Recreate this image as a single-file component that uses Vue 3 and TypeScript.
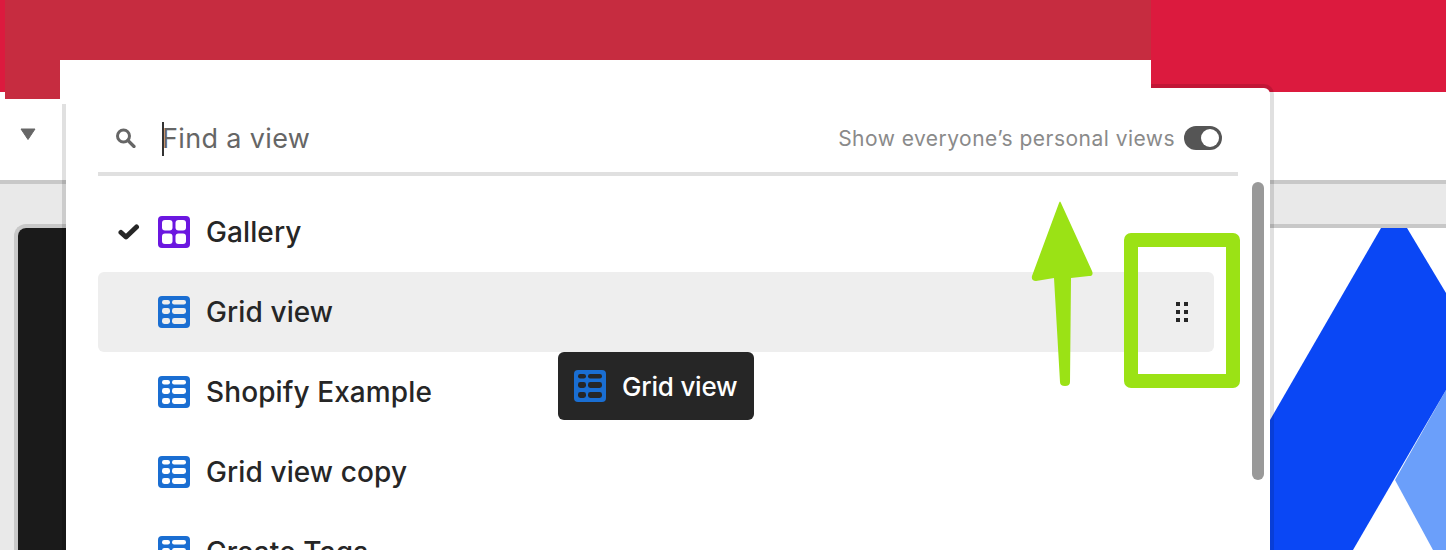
<script setup lang="ts">
interface ViewItem {
  name: string
  icon: string
  selected?: boolean
  hovered?: boolean
}

const views: ViewItem[] = [
  { name: 'Gallery', icon: '#icon-gallery', selected: true },
  { name: 'Grid view', icon: '#icon-grid', hovered: true },
  { name: 'Shopify Example', icon: '#icon-grid' },
  { name: 'Grid view copy', icon: '#icon-grid' },
  { name: 'Create Tags', icon: '#icon-grid' }
]
</script>

<template>
  <div class="page">
    <svg class="defs" aria-hidden="true">
      <symbol id="icon-gallery" viewBox="0 0 32 32">
        <rect width="32" height="32" rx="4" fill="#6b17e0" />
        <rect x="4" y="4" width="10.5" height="10.5" rx="3" fill="#fff" />
        <rect x="17.5" y="4" width="10.5" height="10.5" rx="3" fill="#fff" />
        <rect x="4" y="17.5" width="10.5" height="10.5" rx="3" fill="#fff" />
        <rect x="17.5" y="17.5" width="10.5" height="10.5" rx="3" fill="#fff" />
      </symbol>
      <symbol id="icon-grid" viewBox="0 0 32 32">
        <rect width="32" height="32" rx="4" fill="#1a6ed2" />
        <g fill="currentColor">
          <rect x="4" y="4" width="8" height="4.5" rx="2.2" />
          <rect x="14" y="4" width="14" height="4.5" rx="2.2" />
          <rect x="4" y="12" width="8" height="6" rx="2.4" />
          <rect x="14" y="12" width="14" height="6" rx="2.4" />
          <rect x="4" y="22" width="8" height="6" rx="2.4" />
          <rect x="14" y="22" width="14" height="6" rx="2.4" />
        </g>
      </symbol>
    </svg>

    <header class="topbar"></header>
    <div class="toolbar">
      <svg class="caret-down" width="16" height="12" viewBox="0 0 16 12">
        <path d="M1 1h14L8 11.5z" fill="#666" stroke="#666" stroke-width="1" stroke-linejoin="round" />
      </svg>
    </div>
    <div class="band"></div>
    <div class="content">
      <div class="card">
        <div class="card-dark"></div>
        <svg class="logo" width="176" height="322" viewBox="1270 228 176 322">
          <polygon points="1395,480 1446,390 1446,550 1433,550" fill="#6b9ffa" />
          <polygon points="1381,228 1407,228 1446,293 1446,390 1353,550 1270,550 1270,420" fill="#0a47f5" />
        </svg>
      </div>
    </div>

    <div class="redact-muted"></div>
    <div class="redact-side"></div>

    <div class="popup">
      <div class="search">
        <svg class="search-icon" width="20" height="20" viewBox="0 0 20 20">
          <circle cx="7.5" cy="8" r="6" fill="none" stroke="#666" stroke-width="3" />
          <path d="M12 12.5l6 6" fill="none" stroke="#666" stroke-width="3.2" stroke-linecap="round" />
        </svg>
        <div class="search-input"><span class="cursor"></span>Find a view</div>
        <span class="personal">Show everyone’s personal views</span>
        <span class="toggle"><span class="knob"></span></span>
      </div>
      <ul class="view-list">
        <li v-for="view in views" :key="view.name" class="view-row" :class="{ hovered: view.hovered }">
          <span class="check">
            <svg v-if="view.selected" width="22" height="18" viewBox="0 0 22 18">
              <path d="M3 9.5l5 4.5L18.5 4" fill="none" stroke="#262626" stroke-width="5" stroke-linejoin="round" stroke-linecap="round" />
            </svg>
          </span>
          <svg class="view-icon" width="32" height="32"><use :href="view.icon" /></svg>
          <span class="view-name">{{ view.name }}</span>
          <svg v-if="view.hovered" class="drag" width="12" height="20" viewBox="0 0 12 20">
            <path d="M0 0h4v4H0zM8 0h4v4H8zM0 8h4v4H0zM8 8h4v4H8zM0 16h4v4H0zM8 16h4v4H8z" fill="#262626" />
          </svg>
        </li>
      </ul>
      <div class="scrollbar"></div>
    </div>

    <div class="tooltip">
      <svg class="tooltip-icon" width="32" height="32"><use href="#icon-grid" /></svg>
      <span>Grid view</span>
    </div>

    <svg class="annotations" width="1446" height="550" viewBox="0 0 1446 550">
      <path d="M1061 203L1092 271Q1094 276 1089 276L1071 278L1070 382Q1070 386 1065 386Q1060 386 1060 382L1054 278L1036 281Q1031 281 1032 276L1059 203Q1060 200 1061 203z" fill="#9be215" />
      <rect x="1131" y="240" width="102" height="141" fill="none" stroke="#9be215" stroke-width="14" stroke-linejoin="round" />
    </svg>
  </div>
</template>

<style scoped>
.page {
  position: relative;
  width: 1446px;
  height: 550px;
  overflow: hidden;
  display: flex;
  flex-direction: column;
  background: #fff;
  font-family: Inter, "Liberation Sans", sans-serif;
}
.defs {
  position: absolute;
  width: 0;
  height: 0;
}
.topbar {
  flex: none;
  height: 92px;
  background: #dc1a3e;
}
.toolbar {
  flex: none;
  height: 88px;
  padding-left: 20px;
  background: #fff;
  border-bottom: 4px solid #c8c8c8;
}
.caret-down {
  display: block;
  margin-top: 36px;
}
.band {
  flex: none;
  height: 40px;
  background: #e9e9e9;
}
.content {
  flex: 1;
  display: flex;
  padding-left: 14px;
  background: #e9e9e9;
  min-height: 0;
}
.card {
  flex: 1;
  display: flex;
  justify-content: space-between;
  border-top: 4px solid #c8c8c8;
  border-left: 4px solid #c8c8c8;
  border-top-left-radius: 12px;
  background: #fff;
  overflow: hidden;
}
.card-dark {
  width: 300px;
  background: #1a1a1a;
}
.logo {
  display: block;
  flex: none;
}

.redact-muted {
  position: absolute;
  left: 5px;
  top: 0;
  width: 1146px;
  height: 60px;
  background: #c62c40;
}
.redact-side {
  position: absolute;
  left: 5px;
  top: 60px;
  width: 55px;
  height: 39px;
  background: #c62c40;
}

.popup {
  position: absolute;
  left: 62px;
  top: 84px;
  width: 1212px;
  height: 520px;
  border: 4px solid rgba(0, 0, 0, 0.12);
  border-radius: 10px;
  background: #fff;
  background-clip: padding-box;
  padding: 0 32px;
  box-sizing: border-box;
}
.popup::before {
  content: "";
  position: absolute;
  left: -6px;
  top: -28px;
  width: 1091px;
  height: 44px;
  background: #fff;
}
.search {
  position: relative;
  display: flex;
  align-items: center;
  height: 68px;
  border-bottom: 4px solid #e0e0e0;
  padding: 16px 16px 0 18px;
}
.search-icon {
  flex: none;
  margin-right: 26px;
}
.search-input {
  flex: 1;
  position: relative;
  margin-top: 2px;
  font-size: 27px;
  line-height: 34px;
  color: #666;
  letter-spacing: 0.35px;
}
.cursor {
  position: absolute;
  left: 0;
  top: 0;
  width: 2px;
  height: 34px;
  background: #333;
}
.personal {
  font-size: 21px;
  color: #8a8a8a;
  letter-spacing: 0.47px;
  margin-right: 9px;
}
.toggle {
  width: 38px;
  height: 24px;
  border-radius: 12px;
  background: #555;
  display: flex;
  align-items: center;
  justify-content: flex-end;
  padding-right: 3px;
  box-sizing: border-box;
}
.knob {
  width: 18px;
  height: 18px;
  border-radius: 50%;
  background: #fff;
}
.view-list {
  list-style: none;
  margin: 16px 24px 0 0;
  padding: 0;
}
.view-row {
  display: flex;
  align-items: center;
  height: 80px;
  padding: 0 26px 0 20px;
  border-radius: 6px;
}
.view-row.hovered {
  background: #eee;
}
.check {
  display: flex;
  width: 40px;
  flex: none;
}
.view-icon {
  flex: none;
  margin-right: 16px;
  color: #fff;
}
.view-row.hovered .view-icon {
  color: #eee;
}
.view-name {
  flex: 1;
  font-size: 28px;
  font-weight: 500;
  letter-spacing: 0.1px;
  color: #262626;
}
.drag {
  flex: none;
}
.scrollbar {
  position: absolute;
  left: 1186px;
  top: 94px;
  width: 12px;
  height: 298px;
  border-radius: 6px;
  background: #999;
}

.tooltip {
  position: absolute;
  left: 558px;
  top: 352px;
  display: flex;
  align-items: center;
  gap: 16px;
  width: 196px;
  height: 68px;
  padding-left: 16px;
  box-sizing: border-box;
  border-radius: 6px;
  background: #262626;
  color: #fff;
  font-size: 26px;
  font-weight: 500;
  letter-spacing: -0.2px;
}
.tooltip-icon {
  color: #262626;
}
.annotations {
  position: absolute;
  left: 0;
  top: 0;
  pointer-events: none;
}
</style>

<style>
html, body {
  margin: 0;
  overflow: hidden;
}
</style>
